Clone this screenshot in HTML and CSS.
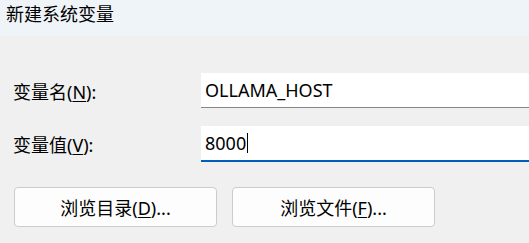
FILE: index.html
```html
<!DOCTYPE html>
<html lang="zh-CN">
<head>
<meta charset="utf-8">
<title>新建系统变量</title>
<link rel="stylesheet" href="styles.css">
</head>
<body>
<div class="dialog">
  <div class="titlebar">新建系统变量</div>
  <div class="content">
    <div class="row row-name">
      <label class="label">变量名(<u>N</u>):</label>
      <div class="field">OLLAMA_HOST</div>
    </div>
    <div class="row row-value">
      <label class="label">变量值(<u>V</u>):</label>
      <div class="field focused">8000<span class="caret"></span></div>
    </div>
    <div class="buttons">
      <button class="btn">浏览目录(<u>D</u>)...</button>
      <button class="btn">浏览文件(<u>F</u>)...</button>
    </div>
  </div>
</div>
</body>
</html>
```
FILE: styles.css
```css
html, body {
  margin: 0;
  padding: 0;
  background: #f0f0f0;
  overflow: hidden;
}
.dialog {
  width: 529px;
  height: 243px;
  font-family: "Noto Sans", "Noto Sans CJK SC", sans-serif;
  font-size: 18px;
  color: #000;
  overflow: hidden;
}
.titlebar {
  height: 36px;
  background: #eff4f9;
  padding-left: 6px;
  line-height: 28px;
  box-sizing: border-box;
}
.content {
  padding: 37px 0 0 13px;
}
.row {
  display: flex;
  align-items: center;
}
.row-value {
  margin-top: 18px;
}
.label {
  width: 188px;
  flex: none;
}
.field {
  flex: none;
  width: 340px;
  height: 35px;
  background: #fff;
  border-bottom: 1px solid #868686;
  box-sizing: border-box;
  padding-left: 4px;
  line-height: 33px;
  display: flex;
  align-items: center;
}
.field.focused {
  height: 36px;
  border-bottom: 2px solid #005fb8;
}
.caret {
  display: inline-block;
  width: 1px;
  height: 20px;
  background: #000;
  margin-left: 1px;
}
.buttons {
  display: flex;
  gap: 15px;
  margin-top: 25px;
  margin-left: 1px;
}
.btn {
  width: 203px;
  height: 40px;
  background: #fdfdfd;
  border: 1px solid #cccccc;
  border-radius: 4px;
  font-family: inherit;
  font-size: 18px;
  color: #000;
  padding: 0;
}
u {
  text-decoration-thickness: 1px;
  text-underline-offset: 2px;
}
```
